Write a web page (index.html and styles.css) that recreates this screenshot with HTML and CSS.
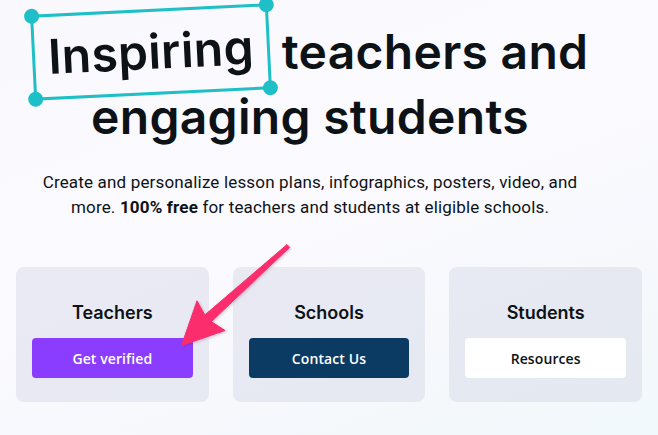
FILE: index.html
```html
<!DOCTYPE html>
<html lang="en">
<head>
<meta charset="utf-8">
<title>Canva for Education</title>
<link rel="stylesheet" href="styles.css">
</head>
<body>
<main class="page">
  <section class="hero">
    <h1 class="headline"><span class="boxed"><span class="boxed-word">Inspiring</span><span class="dot dot-tl"></span><span class="dot dot-tr"></span><span class="dot dot-bl"></span><span class="dot dot-br"></span></span> teachers and<br>engaging students</h1>
    <p class="lead">Create and personalize lesson plans, infographics, posters, video, and<br>more. <strong>100% free</strong> for teachers and students at eligible schools.</p>
  </section>
  <section class="cards">
    <div class="card">
      <h2 class="card-title">Teachers</h2>
      <a class="btn btn-purple" href="#">Get verified</a>
    </div>
    <div class="card">
      <h2 class="card-title">Schools</h2>
      <a class="btn btn-navy" href="#">Contact Us</a>
    </div>
    <div class="card">
      <h2 class="card-title">Students</h2>
      <a class="btn btn-white" href="#">Resources</a>
    </div>
  </section>
  <svg class="arrow" width="658" height="435" viewBox="0 0 658 435" aria-hidden="true">
    <polygon points="287,244.6 289.6,247.4 211.3,321.6 225,330.5 181.5,345.5 197,300.8 204.8,315" fill="#fb2d6c" stroke="#fb2d6c" stroke-width="1" stroke-linejoin="round"/>
  </svg>
</main>
</body>
</html>
```
FILE: styles.css
```css
* { box-sizing: border-box; }
html, body { margin: 0; padding: 0; }
body {
  width: 658px;
  height: 435px;
  overflow: hidden;
  background: linear-gradient(160deg, #f9f8fd 0%, #fbfaff 45%, #f6f8fc 75%, #f1f9fb 100%);
  color: #0d1216;
}
.page {
  position: relative;
  width: 658px;
  height: 435px;
  padding-top: 19px;
}
.hero {
  width: 620px;
  text-align: center;
}
.headline {
  margin: 0;
  font-family: "Inter", "Noto Sans", sans-serif;
  font-weight: 600;
  font-size: 48px;
  line-height: 65px;
  letter-spacing: 0.3px;
  color: #0d1216;
}
.boxed {
  position: relative;
  display: inline-block;
  line-height: 1;
  padding: 16px 13px 16px 13px;
  margin: -12px 0;
  border: 3px solid #1ebfc7;
  transform: rotate(-2.8deg);
}
.boxed-word { display: inline-block; }
.dot {
  position: absolute;
  width: 15px;
  height: 15px;
  border-radius: 50%;
  background: #1ebfc7;
}
.dot-tl { top: -9px; left: -9px; }
.dot-tr { top: -9px; right: -9px; }
.dot-bl { bottom: -9px; left: -9px; }
.dot-br { bottom: -9px; right: -9px; }
.lead {
  margin: 21px 0 0;
  font-family: "Roboto", "Liberation Sans", sans-serif;
  font-size: 17px;
  line-height: 25px;
  letter-spacing: 0.17px;
  color: #0d1216;
}
.lead strong { font-weight: 700; }
.cards {
  display: flex;
  gap: 24px;
  padding: 0 16px;
  margin-top: 47px;
}
.card {
  width: 193px;
  height: 135px;
  border-radius: 8px;
  background: rgba(205, 208, 225, 0.38);
  padding: 34px 16px 24px;
  display: flex;
  flex-direction: column;
  align-items: stretch;
  gap: 13px;
}
.card-title {
  margin: 0;
  font-family: "Inter", "Noto Sans", sans-serif;
  font-weight: 600;
  font-size: 18px;
  line-height: 24px;
  text-align: center;
  color: #0d1216;
}
.btn {
  display: flex;
  align-items: center;
  justify-content: center;
  height: 40px;
  border-radius: 4px;
  font-family: "Open Sans", "Noto Sans", sans-serif;
  font-weight: 600;
  font-size: 14px;
  letter-spacing: 0.1px;
  text-decoration: none;
}
.btn-purple { background: #8b3dff; color: #ffffff; }
.btn-navy { background: #0b3a62; color: #ffffff; }
.btn-white { background: #ffffff; color: #0d1216; }
.arrow {
  position: absolute;
  left: 0;
  top: 0;
  pointer-events: none;
  filter: drop-shadow(1px 1px 1.5px rgba(120, 20, 60, 0.25));
}
```
